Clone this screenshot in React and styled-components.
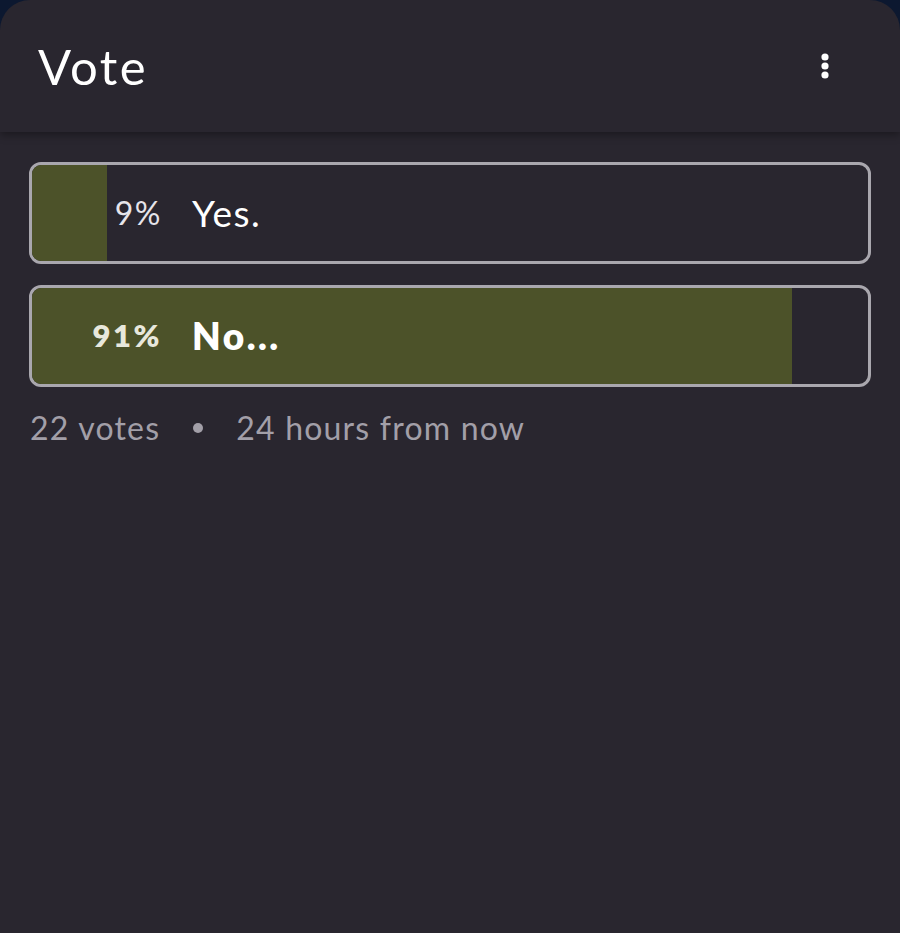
import React from 'react';
import styled, { createGlobalStyle } from 'styled-components';

const GlobalStyle = createGlobalStyle`
  html, body {
    margin: 0;
    padding: 0;
    background: #0c1830;
    font-family: 'Lato', 'Noto Sans', sans-serif;
  }
`;

const Card = styled.div`
  width: 900px;
  height: 933px;
  background: #29262f;
  border-radius: 30px 30px 0 0;
  overflow: hidden;
  display: flex;
  flex-direction: column;
`;

const Header = styled.header`
  height: 132px;
  box-sizing: border-box;
  padding: 0 70px 0 38px;
  display: flex;
  align-items: center;
  justify-content: space-between;
  box-shadow: 0 3px 8px rgba(0, 0, 0, 0.35);
  position: relative;
  z-index: 1;
`;

const Title = styled.h1`
  margin: 0;
  font-size: 49px;
  font-weight: 400;
  color: #ffffff;
  letter-spacing: 2.5px;
`;

const MenuButton = styled.button`
  background: none;
  border: none;
  padding: 0;
  cursor: pointer;
  display: flex;
`;

const Body = styled.div`
  padding: 30px 29px 0 29px;
  display: flex;
  flex-direction: column;
  gap: 21px;
`;

const Option = styled.div`
  position: relative;
  height: 102px;
  box-sizing: border-box;
  border: 3px solid #a9a7ae;
  border-radius: 12px;
  overflow: hidden;
  display: flex;
  align-items: center;
`;

const Fill = styled.div`
  position: absolute;
  left: 0;
  top: 0;
  bottom: 0;
  background: #4c5229;
`;

const Percent = styled.span`
  position: relative;
  width: 130px;
  text-align: right;
  font-size: ${p => (p.$win ? '31px' : '32px')};
  letter-spacing: ${p => (p.$win ? '2.5px' : '1.5px')};
  font-weight: ${p => (p.$win ? 800 : 400)};
  color: ${p => (p.$win ? '#e8e8dc' : '#e6e4ea')};
  margin-bottom: 2px;
`;

const Label = styled.span`
  position: relative;
  margin-left: 30px;
  font-size: 37px;
  letter-spacing: ${p => (p.$win ? '2.5px' : '1.5px')};
  font-weight: ${p => (p.$win ? 800 : 400)};
  color: #ffffff;
  margin-bottom: 2px;
`;

const Footer = styled.div`
  display: flex;
  align-items: center;
  gap: 33px;
  font-size: 32px;
  letter-spacing: 1.2px;
  color: #a29fa8;
  padding-left: 1px;
`;

const Dot = styled.span`
  width: 10px;
  height: 10px;
  border-radius: 50%;
  background: #a29fa8;
`;

const options = [
  { label: 'Yes.', pct: 9, fill: 75 },
  { label: 'No...', pct: 91, fill: 760, win: true },
];

export default function App() {
  return (
    <>
      <GlobalStyle />
      <Card>
        <Header>
          <Title>Vote</Title>
          <MenuButton aria-label="More">
            <svg width="10" height="26" viewBox="0 0 10 26">
              <circle cx="5" cy="4" r="3.6" fill="#fff" />
              <circle cx="5" cy="13" r="3.6" fill="#fff" />
              <circle cx="5" cy="22" r="3.6" fill="#fff" />
            </svg>
          </MenuButton>
        </Header>
        <Body>
          {options.map(o => (
            <Option key={o.label}>
              <Fill style={{ width: o.fill }} />
              <Percent $win={o.win}>{o.pct}%</Percent>
              <Label $win={o.win}>{o.label}</Label>
            </Option>
          ))}
          <Footer>
            <span>22 votes</span>
            <Dot />
            <span>24 hours from now</span>
          </Footer>
        </Body>
      </Card>
    </>
  );
}
